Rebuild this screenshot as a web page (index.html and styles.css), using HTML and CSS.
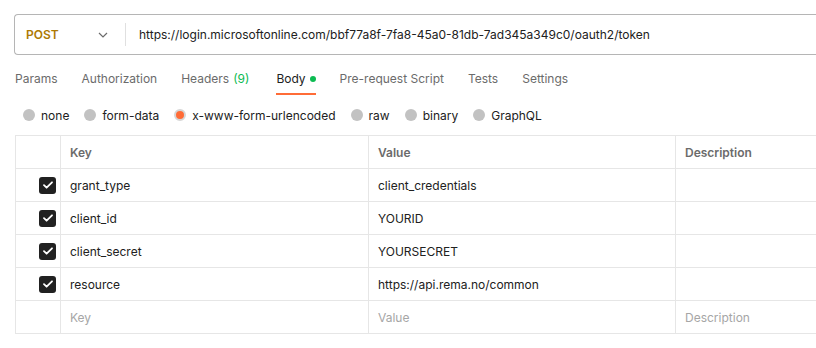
FILE: index.html
```html
<!DOCTYPE html>
<html lang="en">
<head>
    <meta charset="UTF-8">
    <meta name="viewport" content="width=device-width, initial-scale=1.0">
    <title>Request Body</title>
    <link rel="stylesheet" href="styles.css">
</head>
<body>
    <div class="request-bar">
        <div class="method">
            <span class="method-name">POST</span>
            <svg class="chevron" width="10" height="6" viewBox="0 0 10 6"><path d="M1 1l4 4 4-4" fill="none" stroke="#6b6b6b" stroke-width="1.2"/></svg>
        </div>
        <div class="url">https://login.microsoftonline.com/bbf77a8f-7fa8-45a0-81db-7ad345a349c0/oauth2/token</div>
    </div>

    <div class="tabs">
        <div class="tab">Params</div>
        <div class="tab">Authorization</div>
        <div class="tab">Headers<span class="count">(9)</span></div>
        <div class="tab active">Body<span class="dot"></span></div>
        <div class="tab">Pre-request Script</div>
        <div class="tab">Tests</div>
        <div class="tab">Settings</div>
    </div>

    <div class="body-types">
        <label class="radio"><span class="circle"></span>none</label>
        <label class="radio"><span class="circle"></span>form-data</label>
        <label class="radio"><span class="circle selected"></span>x-www-form-urlencoded</label>
        <label class="radio"><span class="circle"></span>raw</label>
        <label class="radio"><span class="circle"></span>binary</label>
        <label class="radio"><span class="circle"></span>GraphQL</label>
    </div>

    <table class="params">
        <colgroup>
            <col class="col-check">
            <col class="col-key">
            <col class="col-value">
            <col class="col-desc">
        </colgroup>
        <thead>
            <tr>
                <th></th>
                <th>Key</th>
                <th>Value</th>
                <th>Description</th>
            </tr>
        </thead>
        <tbody>
            <tr>
                <td class="check"><span class="checkbox"><svg width="10" height="8" viewBox="0 0 10 8"><path d="M1 4.2l2.6 2.5L9 1.3" fill="none" stroke="#fff" stroke-width="1.8" stroke-linecap="round" stroke-linejoin="round"/></svg></span></td>
                <td>grant_type</td>
                <td>client_credentials</td>
                <td></td>
            </tr>
            <tr>
                <td class="check"><span class="checkbox"><svg width="10" height="8" viewBox="0 0 10 8"><path d="M1 4.2l2.6 2.5L9 1.3" fill="none" stroke="#fff" stroke-width="1.8" stroke-linecap="round" stroke-linejoin="round"/></svg></span></td>
                <td>client_id</td>
                <td>YOURID</td>
                <td></td>
            </tr>
            <tr>
                <td class="check"><span class="checkbox"><svg width="10" height="8" viewBox="0 0 10 8"><path d="M1 4.2l2.6 2.5L9 1.3" fill="none" stroke="#fff" stroke-width="1.8" stroke-linecap="round" stroke-linejoin="round"/></svg></span></td>
                <td>client_secret</td>
                <td>YOURSECRET</td>
                <td></td>
            </tr>
            <tr>
                <td class="check"><span class="checkbox"><svg width="10" height="8" viewBox="0 0 10 8"><path d="M1 4.2l2.6 2.5L9 1.3" fill="none" stroke="#fff" stroke-width="1.8" stroke-linecap="round" stroke-linejoin="round"/></svg></span></td>
                <td>resource</td>
                <td>https://api.rema.no/common</td>
                <td></td>
            </tr>
            <tr class="placeholder">
                <td></td>
                <td>Key</td>
                <td>Value</td>
                <td>Description</td>
            </tr>
        </tbody>
    </table>
</body>
</html>
```

FILE: styles.css
```css
body {
    font-family: Inter, "Noto Sans", sans-serif;
    font-size: 12px;
    color: #212121;
    background-color: #fff;
    margin: 0;
    overflow: hidden;
}
.request-bar {
    display: flex;
    align-items: center;
    margin: 14px 0 0 14px;
    width: 900px;
    height: 39px;
    border: 1px solid #b5b5b5;
    border-right: none;
    border-radius: 4px 0 0 4px;
}
.method {
    display: flex;
    align-items: center;
    justify-content: space-between;
    width: 82px;
    height: 23px;
    padding: 0 17px 0 11px;
    border-right: 1px solid #e0e0e0;
}
.method-name {
    color: #ad7a03;
    font-weight: 600;
}
.url {
    padding-left: 13px;
    white-space: nowrap;
}
.tabs {
    display: flex;
    gap: 24px;
    margin-top: 7px;
    padding-left: 15px;
}
.tab {
    display: flex;
    align-items: center;
    line-height: 16px;
    padding: 9px 0 6px;
    border-bottom: 2px solid transparent;
    color: #6b6b6b;
    white-space: nowrap;
}
.tab.active {
    color: #212121;
    border-bottom-color: #ff6c37;
}
.count {
    color: #0cbb52;
    margin: 0 3px 0 4px;
}
.dot {
    width: 6px;
    height: 6px;
    border-radius: 50%;
    background-color: #0cbb52;
    margin-left: 4px;
}
.body-types {
    display: flex;
    gap: 15px;
    margin-top: 10px;
    padding-left: 23px;
    height: 20px;
    align-items: center;
}
.radio {
    display: flex;
    align-items: center;
    gap: 6px;
    color: #212121;
}
.circle {
    width: 12px;
    height: 12px;
    border-radius: 50%;
    background-color: #c2c2c2;
}
.circle.selected {
    box-sizing: border-box;
    border: 2px solid #d6d6d6;
    background-color: #ff6c37;
}
.params {
    margin: 10px 0 0 15px;
    border-collapse: collapse;
    table-layout: fixed;
    width: 960px;
}
.col-check {
    width: 45px;
}
.col-key {
    width: 308px;
}
.col-value {
    width: 307px;
}
.params th,
.params td {
    height: 32px;
    padding: 0 9px;
    border: 1px solid #e6e6e6;
    text-align: left;
    white-space: nowrap;
}
.params th {
    color: #6b6b6b;
    font-weight: 600;
}
.params td.check {
    padding: 0 4px 0 0;
    text-align: right;
}
.checkbox {
    display: inline-flex;
    align-items: center;
    justify-content: center;
    width: 17px;
    height: 17px;
    border-radius: 3px;
    background-color: #212121;
    vertical-align: middle;
}
.placeholder td {
    color: #a6a6a6;
}
```
